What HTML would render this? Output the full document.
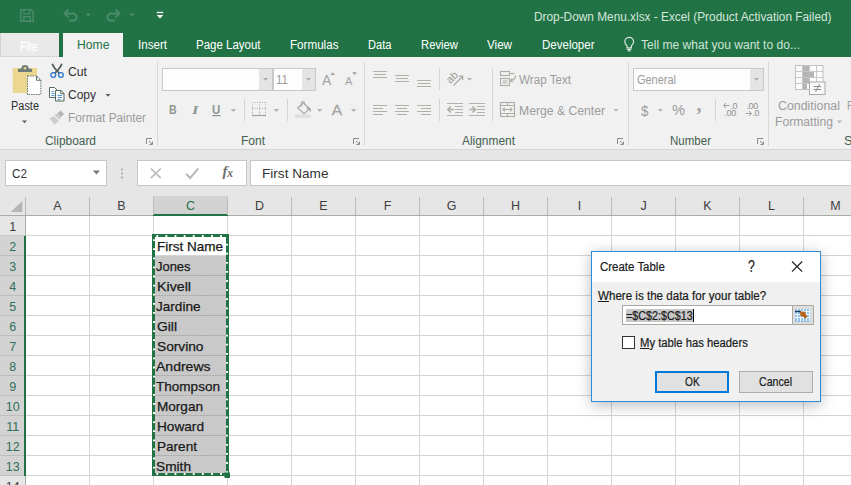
<!DOCTYPE html>
<html><head><meta charset="utf-8">
<style>
*{box-sizing:border-box;margin:0;padding:0}
html,body{width:851px;height:485px;overflow:hidden;background:#fff}
body{font-family:"Liberation Sans",sans-serif;position:relative;font-size:12px;color:#333}
.a{position:absolute}
.t{position:absolute;white-space:nowrap;line-height:1;transform-origin:0 0}
svg{position:absolute;overflow:visible}
</style></head><body>
<!-- backgrounds -->
<div class="a" style="left:0;top:0;width:851px;height:57px;background:#217346"></div>
<div class="a" style="left:0;top:57px;width:851px;height:93px;background:#f1f1f1"></div>
<div class="a" style="left:0;top:149px;width:851px;height:1px;background:#d6d6d6"></div>
<div class="a" style="left:0;top:150px;width:851px;height:46px;background:#e6e6e6"></div>
<!-- tabs -->
<div class="a" style="left:0;top:33px;width:59px;height:24px;background:#e9e9e9;border-left:1px solid #d2d2d2;border-bottom:1px dotted #c4c4c4"></div>
<div class="a" style="left:63px;top:33px;width:60px;height:25px;background:#f1f1f1"></div>
<!-- quick access -->
<svg style="left:0;top:0" width="200" height="33" viewBox="0 0 200 33" fill="none" stroke="#4d8a69" stroke-width="1.500">
 <path d="M20.800 9.800h10.400l2 2v9.400H20.800z"/><path d="M23.800 10v3.800h6V10" stroke-width="1.300"/><path d="M23.800 21v-4.300h6.400V21" stroke-width="1.300"/>
 <path d="M69 20.800h3.800a3.700 3.700 0 0 0 0-7.400H65" stroke-width="2"/><path d="M68.600 9.400 64.600 13.400 68.600 17.400" stroke-width="2"/>
 <path d="M115 20.800h-3.800a3.700 3.700 0 0 1 0-7.400H119" stroke-width="2"/><path d="M115.400 9.400 119.400 13.400 115.400 17.400" stroke-width="2"/>
 <path d="M85.500 13.500h5.400l-2.700 3z" fill="#4d8a69" stroke="none"/>
 <path d="M129.500 13.500h5.400l-2.700 3z" fill="#4d8a69" stroke="none"/>
 <path d="M156.800 12.500h6.400" stroke="#fff" stroke-width="1.400"/><path d="M156.600 15h6.800l-3.400 3.600z" fill="#fff" stroke="none"/>
</svg>
<!-- lightbulb -->
<svg style="left:620px;top:35px" width="18" height="18" viewBox="0 0 18 18" fill="none" stroke="#d5e6dc" stroke-width="1.200">
 <path d="M7 10.800c-1.500-1.200-2.200-2.500-2.200-4a4.400 4.400 0 0 1 8.800 0c0 1.500-.7 2.800-2.200 4v2H7z"/><path d="M7 14.300h4.400M7.800 15.900h2.800"/>
</svg>
<!-- group separators -->
<div class="a" style="left:157px;top:62px;width:1px;height:84px;background:#d8d8d8"></div>
<div class="a" style="left:364px;top:62px;width:1px;height:84px;background:#d8d8d8"></div>
<div class="a" style="left:628px;top:62px;width:1px;height:84px;background:#d8d8d8"></div>
<div class="a" style="left:768px;top:62px;width:1px;height:84px;background:#d8d8d8"></div>
<!-- inner separators -->
<div class="a" style="left:244px;top:99px;width:1px;height:22px;background:#d4d4d4"></div>
<div class="a" style="left:287px;top:99px;width:1px;height:22px;background:#d4d4d4"></div>
<div class="a" style="left:439px;top:68px;width:1px;height:22px;background:#d4d4d4"></div>
<div class="a" style="left:439px;top:99px;width:1px;height:22px;background:#d4d4d4"></div>
<div class="a" style="left:492px;top:68px;width:1px;height:53px;background:#d4d4d4"></div>
<div class="a" style="left:715px;top:99px;width:1px;height:22px;background:#d4d4d4"></div>
<!-- combo boxes -->
<div class="a" style="left:162px;top:68px;width:111px;height:23px;background:#fdfdfd;border:1px solid #c8c8c8"></div>
<div class="a" style="left:259px;top:69px;width:13px;height:21px;background:#e4e4e4"></div>
<div class="a" style="left:273px;top:68px;width:43px;height:23px;background:#fdfdfd;border:1px solid #c8c8c8"></div>
<div class="a" style="left:302px;top:69px;width:13px;height:21px;background:#e4e4e4"></div>
<div class="a" style="left:633px;top:68px;width:131px;height:23px;background:#fdfdfd;border:1px solid #c8c8c8"></div>
<div class="a" style="left:750px;top:69px;width:13px;height:21px;background:#e4e4e4"></div>
<!-- ICONS -->
<svg style="left:0;top:0" width="851" height="150" viewBox="0 0 851 150" fill="none">
<!-- PASTE -->
<rect x="12.700" y="68" width="24.300" height="25" fill="#ecd791"/>
<path d="M18 72v-3.200h3.200a3.800 3.800 0 0 1 7.600 0H32V72z" fill="#6f7d78"/>
<circle cx="25" cy="68.300" r="1.300" fill="#ecd791"/>
<path d="M27.500 76h9l4.300 4.300V94.500H27.500z" fill="#fff" stroke="#667a74" stroke-width="1.100" stroke-dasharray="1.600 .900"/>
<path d="M36.500 76v4.300h4.300" stroke="#667a74" stroke-width="1"/>
<path d="M22 120.500h5l-2.500 2.800z" fill="#5a5a5a"/>
<!-- CUT -->
<path d="M52.200 63.800c1.500 4 4.300 7 7.300 9.600M61.900 63.800c-1.500 4-4.300 7-7.300 9.600" stroke="#55605c" stroke-width="1.700"/>
<circle cx="53.300" cy="75" r="2.400" stroke="#2d77c9" stroke-width="1.300"/>
<circle cx="60.900" cy="75" r="2.400" stroke="#2d77c9" stroke-width="1.300"/>
<!-- COPY -->
<path d="M49.500 87.500h5l2.500 2.500v7.500h-7.500z" fill="#fdfdfd" stroke="#54695f" stroke-width="1"/>
<path d="M51.500 91.500h2.500M51.500 93.500h3M51.500 95.500h3" stroke="#5b97d6" stroke-width="1"/>
<path d="M55.500 90.500h5.500l3 3v7.500h-8.500z" fill="#fdfdfd" stroke="#54695f" stroke-width="1"/>
<path d="M60.800 90.500v3.200H64" stroke="#54695f" stroke-width="1"/>
<path d="M57.500 95.500h4.500M57.500 97.500h4.500M57.500 99.500h3" stroke="#5b97d6" stroke-width="1"/>
<path d="M105.500 94h5l-2.500 2.800z" fill="#5a5a5a"/>
<!-- FORMAT PAINTER -->
<path d="M60.500 110.500l3.500 3.500-3.200 3.200-3.500-3.500z" fill="#b5b5b5"/>
<path d="M56.300 113.500l4.500 4.500-1.500 1.500-4.500-4.500z" fill="#c4c4c4"/>
<path d="M54 116l5 5-4.500 3.500-5-6z" fill="#cdcdcd"/>
<!-- launchers -->
<g stroke="#8a8a8a" stroke-width="1">
<path d="M146.500 144v-5.500h5.500M149 141l3 3M152.500 141.500v3h-3"/>
<path d="M353.500 144v-5.500h5.500M356 141l3 3M359.500 141.500v3h-3"/>
<path d="M617.500 144v-5.500h5.500M620 141l3 3M623.500 141.500v3h-3"/>
<path d="M757.500 144v-5.500h5.500M760 141l3 3M763.500 141.500v3h-3"/>
</g>
<!-- combo arrows -->
<g fill="#a9a9a9">
<path d="M263 78h5l-2.500 2.800z"/><path d="M306 78h5l-2.500 2.800z"/><path d="M754 78h5l-2.500 2.800z"/>
</g>
<!-- small arrows (disabled) -->
<g fill="#b3b3b3">
<path d="M230.700 109h5.400l-2.700 3z"/><path d="M273.700 109h5.400l-2.700 3z"/><path d="M317 109h5.400l-2.700 3z"/><path d="M351 109h5.400l-2.700 3z"/>
<path d="M467 78h5l-2.500 2.800z"/><path d="M613.500 109h5l-2.500 2.800z"/><path d="M657.700 109h5l-2.500 2.800z"/><path d="M837 120.500h5l-2.500 2.800z"/>
</g>
<!-- A^ A v -->
<g fill="#a3a3a3">
<path d="M330.300 75l2.400-2.800 2.400 2.800z"/><path d="M352 72.300h5l-2.500 2.800z"/>
</g>
<!-- underline for U -->
<path d="M212.200 115.600h8.400" stroke="#8f9893" stroke-width="1.200"/>
<!-- borders icon -->
<g stroke="#b0b0b0" stroke-width="1" stroke-dasharray="1 1.500">
<path d="M252 102.500h14M252 108.500h14M252.500 102v13M259.500 102v13M265.500 102v13"/>
</g>
<path d="M252 115.500h14" stroke="#a0a0a0" stroke-width="1.200"/>
<!-- fill bucket -->
<path d="M303.500 103l6 6-5.500 4.800-6.300-6z" stroke="#a8a8a8" stroke-width="1.200"/>
<path d="M301.300 107v-4a1.600 1.600 0 0 1 3.200 0v1.500" stroke="#a8a8a8" stroke-width="1"/>
<path d="M308 106.500c2.500 1 3.300 3 3 5.500-1.300-1-2-2.500-4.500-3.300z" fill="#a8a8a8"/>
<rect x="295" y="114.500" width="16" height="3.200" fill="#dddddd"/>
<!-- align top/mid/bottom -->
<g stroke="#b1b1a9" stroke-width="1.100">
<path d="M373 71.500h14M374 74.500h12M373 77.500h14"/>
<path d="M395 75.500h14M396 78.500h12M395 81.500h14"/>
<path d="M417 80.500h14M418 83.500h12M417 86.500h14"/>
<path d="M373 105.500h14M373 108.500h10M373 111.500h14M373 114.500h10"/>
<path d="M395 105.500h14M397 108.500h10M395 111.500h14M397 114.500h10"/>
<path d="M417 105.500h14M421 108.500h10M417 111.500h14M421 114.500h10"/>
<!-- indent -->
<path d="M447 103.500h16M447 115.500h16M455 106.500h8M455 109.500h8M455 112.500h8"/>
<path d="M469 103.500h16M469 115.500h16M477 106.500h8M477 109.500h8M477 112.500h8"/>
</g>
<g stroke="#adada5" stroke-width="1.500">
<path d="M448 109.500h6M450.800 106.500l-3 3 3 3"/>
<path d="M469.500 109.500h6M472.500 106.500l3 3-3 3"/>
</g>
<!-- orientation -->
<path d="M453.500 85.500l9-9M459 76.200h3.700v3.700" stroke="#a8a8a0" stroke-width="1.200"/>
<!-- wrap text -->
<g stroke="#adada5" stroke-width="1.100">
<rect x="500.500" y="71.500" width="9" height="4"/>
<path d="M509.500 73.500h5"/>
<rect x="500.500" y="78.500" width="9" height="7"/>
<path d="M502.500 81h5M502.500 83h5"/>
<path d="M515.500 75.500c0 3-1.500 5-5 5M512.500 78.500l-2.200 2 2.200 2"/>
</g>
<!-- merge -->
<g stroke="#adada5" stroke-width="1.100">
<rect x="500.500" y="102.500" width="14" height="14"/>
<path d="M500.500 105.500h14M500.500 113.500h14M507.500 102.500v3M507.500 113.500v3"/>
<path d="M503 109.500h9M504.800 107.700l-1.800 1.800 1.800 1.800M510.200 107.700l1.800 1.800-1.800 1.800"/>
</g>
<!-- decimal icons -->
<g stroke="#a0a0a0" stroke-width="1">
<path d="M723.500 105.500h6M726 103l-2.500 2.500 2.500 2.500"/>
<path d="M745.500 113.500h6M749 111l2.500 2.500-2.500 2.500"/>
</g>
<!-- conditional formatting -->
<rect x="795.500" y="65.500" width="27.500" height="24" fill="#fbfbfb" stroke="#c2c2c2"/>
<path d="M802.500 65.500v24M809.500 65.500v24M816.500 65.500v24M795.500 71.500h27.500M795.500 77.500h27.500M795.500 83.500h27.500" stroke="#c8c8c8"/>
<rect x="803" y="66" width="6" height="5" fill="#b4b4b4"/>
<rect x="803" y="72" width="11" height="5" fill="#b4b4b4"/>
<rect x="803" y="78" width="6" height="5" fill="#b4b4b4"/>
<rect x="803" y="84" width="4" height="5" fill="#b4b4b4"/>
<rect x="809.500" y="82" width="15.500" height="12.500" fill="#fafafa" stroke="#a9a9a9"/>
<path d="M813.500 86.500h7.500M813.500 89.500h7.500M819.500 84l-4 8" stroke="#8c8c8c" stroke-width="1"/>
</svg>
<!-- orientation "ab" -->
<span class="t" style="left:446px;top:72px;font-size:11px;color:#9c9c94;transform:rotate(-45deg);transform-origin:50% 50%">ab</span>
<!-- A grow/shrink -->
<span class="t" style="left:322px;top:72.500px;font-size:14px;color:#a3a3a3">A</span>
<span class="t" style="left:345px;top:75.600px;font-size:11px;color:#a3a3a3">A</span>
<span class="t" style="left:331.700px;top:102px;font-size:15.500px;color:#a3a3a3;-webkit-text-stroke:.3px #a3a3a3">A</span>
<!-- comma -->
<span class="t" style="left:696.500px;top:93.500px;font-size:20px;font-weight:bold;color:#a3a3a3;font-family:'Liberation Serif',serif">,</span>
<!-- decimals -->
<span class="t" style="left:730.500px;top:101.600px;font-size:9px;color:#909090;letter-spacing:-.4px">.0</span>
<span class="t" style="left:724.500px;top:108.800px;font-size:9px;color:#909090;letter-spacing:-.4px">.00</span>
<span class="t" style="left:746.500px;top:101.600px;font-size:9px;color:#909090;letter-spacing:-.4px">.00</span>
<span class="t" style="left:752.500px;top:108.800px;font-size:9px;color:#909090;letter-spacing:-.4px">.0</span>

<!-- formula bar -->
<div class="a" style="left:5px;top:160px;width:102px;height:26px;background:#fff;border:1px solid #c6c6c6"></div>
<div class="a" style="left:137px;top:160px;width:110px;height:26px;background:#fff;border:1px solid #c6c6c6"></div>
<div class="a" style="left:250px;top:160px;width:610px;height:26px;background:#fff;border:1px solid #c6c6c6"></div>
<svg style="left:0;top:150px" width="260" height="46" viewBox="0 150 260 46" fill="none">
 <path d="M93 170.500h7l-3.500 4z" fill="#777"/>
 <rect x="121" y="168.500" width="2" height="2" fill="#b0b0b0"/><rect x="121" y="172.500" width="2" height="2" fill="#b0b0b0"/><rect x="121" y="176.500" width="2" height="2" fill="#b0b0b0"/>
 <path d="M150.800 168.500l10 9.600M160.800 168.500l-10 9.600" stroke="#b9b9b9" stroke-width="1.500"/>
 <path d="M186 173.800l4.200 4.200 8-9.500" stroke="#b9b9b9" stroke-width="2"/>
</svg>
<span class="t" style="left:222.500px;top:163.500px;font-family:'Liberation Serif',serif;font-style:italic;font-size:15px;color:#707070;font-weight:bold;letter-spacing:-.2px">f<span style="font-size:11.500px;position:relative;top:1px">x</span></span>
<div class="a" style="left:0;top:196px;width:851px;height:19px;background:#e6e6e6"></div>
<div class="a" style="left:153px;top:196px;width:75px;height:18px;background:#d3d3d3"></div>
<div class="a" style="left:0;top:215px;width:851px;height:1px;background:#a9aca9"></div>
<div class="a" style="left:153px;top:214px;width:75px;height:2px;background:#217346"></div>
<div class="a" style="left:25px;top:197px;width:1px;height:18px;background:#b9bbb9"></div>
<div class="a" style="left:89px;top:197px;width:1px;height:18px;background:#b9bbb9"></div>
<div class="a" style="left:153px;top:197px;width:1px;height:18px;background:#b9bbb9"></div>
<div class="a" style="left:227px;top:197px;width:1px;height:18px;background:#b9bbb9"></div>
<div class="a" style="left:291px;top:197px;width:1px;height:18px;background:#b9bbb9"></div>
<div class="a" style="left:355px;top:197px;width:1px;height:18px;background:#b9bbb9"></div>
<div class="a" style="left:419px;top:197px;width:1px;height:18px;background:#b9bbb9"></div>
<div class="a" style="left:483px;top:197px;width:1px;height:18px;background:#b9bbb9"></div>
<div class="a" style="left:547px;top:197px;width:1px;height:18px;background:#b9bbb9"></div>
<div class="a" style="left:611px;top:197px;width:1px;height:18px;background:#b9bbb9"></div>
<div class="a" style="left:675px;top:197px;width:1px;height:18px;background:#b9bbb9"></div>
<div class="a" style="left:739px;top:197px;width:1px;height:18px;background:#b9bbb9"></div>
<div class="a" style="left:803px;top:197px;width:1px;height:18px;background:#b9bbb9"></div>
<svg style="left:0;top:196px" width="25" height="20" viewBox="0 196 25 20"><path d="M22.3 201v11H10.700z" fill="#b4b6b4"/></svg>
<div class="a" style="left:26px;top:216px;width:825px;height:269px;background:#fff"></div>
<div class="a" style="left:0;top:216px;width:25px;height:19px;background:#e6e6e6"></div>
<div class="a" style="left:0;top:235px;width:25px;height:1px;background:#c6c6c6"></div>
<div class="a" style="left:0;top:236px;width:25px;height:19px;background:#d3d3d3"></div>
<div class="a" style="left:0;top:255px;width:25px;height:1px;background:#bdbdbd"></div>
<div class="a" style="left:0;top:256px;width:25px;height:19px;background:#d3d3d3"></div>
<div class="a" style="left:0;top:275px;width:25px;height:1px;background:#bdbdbd"></div>
<div class="a" style="left:0;top:276px;width:25px;height:19px;background:#d3d3d3"></div>
<div class="a" style="left:0;top:295px;width:25px;height:1px;background:#bdbdbd"></div>
<div class="a" style="left:0;top:296px;width:25px;height:19px;background:#d3d3d3"></div>
<div class="a" style="left:0;top:315px;width:25px;height:1px;background:#bdbdbd"></div>
<div class="a" style="left:0;top:316px;width:25px;height:19px;background:#d3d3d3"></div>
<div class="a" style="left:0;top:335px;width:25px;height:1px;background:#bdbdbd"></div>
<div class="a" style="left:0;top:336px;width:25px;height:19px;background:#d3d3d3"></div>
<div class="a" style="left:0;top:355px;width:25px;height:1px;background:#bdbdbd"></div>
<div class="a" style="left:0;top:356px;width:25px;height:19px;background:#d3d3d3"></div>
<div class="a" style="left:0;top:375px;width:25px;height:1px;background:#bdbdbd"></div>
<div class="a" style="left:0;top:376px;width:25px;height:19px;background:#d3d3d3"></div>
<div class="a" style="left:0;top:395px;width:25px;height:1px;background:#bdbdbd"></div>
<div class="a" style="left:0;top:396px;width:25px;height:19px;background:#d3d3d3"></div>
<div class="a" style="left:0;top:415px;width:25px;height:1px;background:#bdbdbd"></div>
<div class="a" style="left:0;top:416px;width:25px;height:19px;background:#d3d3d3"></div>
<div class="a" style="left:0;top:435px;width:25px;height:1px;background:#bdbdbd"></div>
<div class="a" style="left:0;top:436px;width:25px;height:19px;background:#d3d3d3"></div>
<div class="a" style="left:0;top:455px;width:25px;height:1px;background:#bdbdbd"></div>
<div class="a" style="left:0;top:456px;width:25px;height:19px;background:#d3d3d3"></div>
<div class="a" style="left:0;top:475px;width:25px;height:1px;background:#bdbdbd"></div>
<div class="a" style="left:0;top:476px;width:25px;height:19px;background:#e6e6e6"></div>
<div class="a" style="left:0;top:495px;width:25px;height:1px;background:#c6c6c6"></div>
<div class="a" style="left:25px;top:216px;width:1px;height:269px;background:#a9aca9"></div>
<div class="a" style="left:24px;top:236px;width:2px;height:240px;background:#217346"></div>
<div class="a" style="left:26px;top:235px;width:825px;height:1px;background:#d4d4d4"></div>
<div class="a" style="left:26px;top:255px;width:825px;height:1px;background:#d4d4d4"></div>
<div class="a" style="left:26px;top:275px;width:825px;height:1px;background:#d4d4d4"></div>
<div class="a" style="left:26px;top:295px;width:825px;height:1px;background:#d4d4d4"></div>
<div class="a" style="left:26px;top:315px;width:825px;height:1px;background:#d4d4d4"></div>
<div class="a" style="left:26px;top:335px;width:825px;height:1px;background:#d4d4d4"></div>
<div class="a" style="left:26px;top:355px;width:825px;height:1px;background:#d4d4d4"></div>
<div class="a" style="left:26px;top:375px;width:825px;height:1px;background:#d4d4d4"></div>
<div class="a" style="left:26px;top:395px;width:825px;height:1px;background:#d4d4d4"></div>
<div class="a" style="left:26px;top:415px;width:825px;height:1px;background:#d4d4d4"></div>
<div class="a" style="left:26px;top:435px;width:825px;height:1px;background:#d4d4d4"></div>
<div class="a" style="left:26px;top:455px;width:825px;height:1px;background:#d4d4d4"></div>
<div class="a" style="left:26px;top:475px;width:825px;height:1px;background:#d4d4d4"></div>
<div class="a" style="left:89px;top:216px;width:1px;height:269px;background:#d4d4d4"></div>
<div class="a" style="left:153px;top:216px;width:1px;height:269px;background:#d4d4d4"></div>
<div class="a" style="left:227px;top:216px;width:1px;height:269px;background:#d4d4d4"></div>
<div class="a" style="left:291px;top:216px;width:1px;height:269px;background:#d4d4d4"></div>
<div class="a" style="left:355px;top:216px;width:1px;height:269px;background:#d4d4d4"></div>
<div class="a" style="left:419px;top:216px;width:1px;height:269px;background:#d4d4d4"></div>
<div class="a" style="left:483px;top:216px;width:1px;height:269px;background:#d4d4d4"></div>
<div class="a" style="left:547px;top:216px;width:1px;height:269px;background:#d4d4d4"></div>
<div class="a" style="left:611px;top:216px;width:1px;height:269px;background:#d4d4d4"></div>
<div class="a" style="left:675px;top:216px;width:1px;height:269px;background:#d4d4d4"></div>
<div class="a" style="left:739px;top:216px;width:1px;height:269px;background:#d4d4d4"></div>
<div class="a" style="left:803px;top:216px;width:1px;height:269px;background:#d4d4d4"></div>
<div class="a" style="left:154px;top:256px;width:73px;height:219px;background:#c9c9c9"></div>
<div class="a" style="left:155px;top:275px;width:71px;height:1px;background:repeating-linear-gradient(90deg,#a9aca9 0 2px,#bdbdbd 2px 3px)"></div>
<div class="a" style="left:155px;top:295px;width:71px;height:1px;background:repeating-linear-gradient(90deg,#a9aca9 0 2px,#bdbdbd 2px 3px)"></div>
<div class="a" style="left:155px;top:315px;width:71px;height:1px;background:repeating-linear-gradient(90deg,#a9aca9 0 2px,#bdbdbd 2px 3px)"></div>
<div class="a" style="left:155px;top:335px;width:71px;height:1px;background:repeating-linear-gradient(90deg,#a9aca9 0 2px,#bdbdbd 2px 3px)"></div>
<div class="a" style="left:155px;top:355px;width:71px;height:1px;background:repeating-linear-gradient(90deg,#a9aca9 0 2px,#bdbdbd 2px 3px)"></div>
<div class="a" style="left:155px;top:375px;width:71px;height:1px;background:repeating-linear-gradient(90deg,#a9aca9 0 2px,#bdbdbd 2px 3px)"></div>
<div class="a" style="left:155px;top:395px;width:71px;height:1px;background:repeating-linear-gradient(90deg,#a9aca9 0 2px,#bdbdbd 2px 3px)"></div>
<div class="a" style="left:155px;top:415px;width:71px;height:1px;background:repeating-linear-gradient(90deg,#a9aca9 0 2px,#bdbdbd 2px 3px)"></div>
<div class="a" style="left:155px;top:435px;width:71px;height:1px;background:repeating-linear-gradient(90deg,#a9aca9 0 2px,#bdbdbd 2px 3px)"></div>
<div class="a" style="left:155px;top:455px;width:71px;height:1px;background:repeating-linear-gradient(90deg,#a9aca9 0 2px,#bdbdbd 2px 3px)"></div>
<svg style="left:0;top:0" width="851" height="485" viewBox="0 0 851 485" fill="none"><rect x="153.500" y="235.500" width="74" height="239" stroke="#217346" stroke-width="3"/><g stroke="#fff" stroke-width="2" stroke-dasharray="1.800 7.300"><path d="M156.400 236H226"/><path d="M156.400 474H226"/><path d="M154 239.200V474"/><path d="M227 243.700V474"/></g><rect x="224.500" y="472.500" width="5.500" height="5.500" fill="#217346"/></svg>
<div class="a" style="left:591px;top:251px;width:230px;height:151px;background:#f0f0f0;border:1px solid #2f8cd8;box-shadow:0 3px 14px rgba(0,0,0,.28)"></div>
<div class="a" style="left:592px;top:252px;width:228px;height:30px;background:#fff"></div>
<svg style="left:0;top:0" width="851" height="485" viewBox="0 0 851 485" fill="none"><path d="M792 261.500l10.200 10.200M802.200 261.500l-10.200 10.200" stroke="#1a1a1a" stroke-width="1.100"/></svg>
<div class="a" style="left:622px;top:305px;width:192px;height:20px;background:#fff;border:1px solid #a9a9a2"></div>
<div class="a" style="left:626px;top:309px;width:67px;height:13px;background:#c8c8c8"></div>
<div class="a" style="left:693px;top:309px;width:1px;height:13px;background:#000"></div>
<div class="a" style="left:792px;top:305px;width:22px;height:20px;background:#dedede;border:1.500px solid #a9a9a2"></div>
<svg style="left:0;top:0" width="851" height="485" viewBox="0 0 851 485" fill="none"><rect x="795" y="309" width="15.500" height="12" fill="#f4f8fb"/><g stroke="#2b8be0" stroke-width="1.200" stroke-dasharray="2 1"><path d="M795 310h15.500M795 313h15.500M795 316h15.500M795 319h15.500M795 321h15.500"/></g><path d="M795 311.500h6" stroke="#1d3557" stroke-width="1.500"/><path d="M800 311.500l5.500 .3 0 2 2 2.600-2.300 2.300-2.600-2.400-2.200 .200z" fill="#b5651d"/></svg>
<div class="a" style="left:622px;top:336px;width:13px;height:13px;background:#fff;border:1px solid #333"></div>
<div class="a" style="left:655px;top:371px;width:74px;height:22px;background:#e1e1e1;border:2px solid #0078d7"></div>
<div class="a" style="left:739px;top:371px;width:74px;height:22px;background:#e1e1e1;border:1px solid #adadad"></div>
<span class="t" id="t0" style="left:533.50px;top:11.00px;font-size:12px;color:#d5e6dc;transform:scaleX(0.9869);">Drop-Down Menu.xlsx - Excel (Product Activation Failed)</span>
<span class="t" id="t1" style="left:20.40px;top:41.00px;font-size:12px;color:#ffffff;transform:scaleX(0.8995);-webkit-text-stroke:.3px #fff">File</span>
<span class="t" id="t2" style="left:76.50px;top:39.00px;font-size:12px;color:#217346;transform:scaleX(1.0151);">Home</span>
<span class="t" id="t3" style="left:138.00px;top:39.00px;font-size:12px;color:#ffffff;transform:scaleX(0.9662);">Insert</span>
<span class="t" id="t4" style="left:196.00px;top:39.00px;font-size:12px;color:#ffffff;transform:scaleX(0.9571);">Page Layout</span>
<span class="t" id="t5" style="left:290.00px;top:39.00px;font-size:12px;color:#ffffff;transform:scaleX(0.9697);">Formulas</span>
<span class="t" id="t6" style="left:368.00px;top:39.00px;font-size:12px;color:#ffffff;transform:scaleX(0.9267);">Data</span>
<span class="t" id="t7" style="left:421.00px;top:39.00px;font-size:12px;color:#ffffff;transform:scaleX(0.9401);">Review</span>
<span class="t" id="t8" style="left:487.00px;top:39.00px;font-size:12px;color:#ffffff;transform:scaleX(0.9691);">View</span>
<span class="t" id="t9" style="left:541.50px;top:39.00px;font-size:12px;color:#ffffff;transform:scaleX(0.9597);">Developer</span>
<span class="t" id="t10" style="left:641.00px;top:39.00px;font-size:12px;color:#cfe3d7;transform:scaleX(1.0057);">Tell me what you want to do...</span>
<span class="t" id="t11" style="left:11.00px;top:100.00px;font-size:12px;color:#303030;transform:scaleX(0.9124);">Paste</span>
<span class="t" id="t12" style="left:68.00px;top:66.00px;font-size:12px;color:#303030;transform:scaleX(1.0167);">Cut</span>
<span class="t" id="t13" style="left:68.00px;top:89.00px;font-size:12px;color:#303030;transform:scaleX(0.9994);">Copy</span>
<span class="t" id="t14" style="left:68.00px;top:112.00px;font-size:12px;color:#9c9c9c;transform:scaleX(0.9829);">Format Painter</span>
<span class="t" id="t15" style="left:45.00px;top:135.00px;font-size:12px;color:#44604f;transform:scaleX(0.9927);">Clipboard</span>
<span class="t" id="t16" style="left:241.00px;top:135.00px;font-size:12px;color:#44604f;transform:scaleX(0.9993);">Font</span>
<span class="t" id="t17" style="left:462.00px;top:135.00px;font-size:12px;color:#44604f;transform:scaleX(0.9930);">Alignment</span>
<span class="t" id="t18" style="left:670.00px;top:135.00px;font-size:12px;color:#44604f;transform:scaleX(0.9605);">Number</span>
<span class="t" id="t19" style="left:844.00px;top:135.00px;font-size:12px;color:#44604f;transform:scaleX(1.0579);">St</span>
<span class="t" id="t20" style="left:276.00px;top:74.00px;font-size:12px;color:#9c9c9c;transform:scaleX(0.9624);">11</span>
<span class="t" id="t21" style="left:168.70px;top:104.00px;font-size:12px;color:#8f9893;transform:scaleX(0.8879);font-weight:bold">B</span>
<span class="t" id="t22" style="left:191.50px;top:104.00px;font-size:12.5px;color:#8f9893;transform:scaleX(1.3333);font-style:italic;font-family:'Liberation Serif',serif;font-weight:bold">I</span>
<span class="t" id="t23" style="left:212.20px;top:104.00px;font-size:12px;color:#8f9893;transform:scaleX(0.9571);font-weight:bold">U</span>
<span class="t" id="t24" style="left:519.00px;top:74.00px;font-size:12px;color:#9c9c9c;transform:scaleX(0.9705);">Wrap Text</span>
<span class="t" id="t25" style="left:519.00px;top:105.00px;font-size:12px;color:#9c9c9c;transform:scaleX(1.0153);">Merge &amp; Center</span>
<span class="t" id="t26" style="left:636.50px;top:74.00px;font-size:12px;color:#9c9c9c;transform:scaleX(0.9133);">General</span>
<span class="t" id="t27" style="left:640.70px;top:103.00px;font-size:15px;color:#9c9c9c;transform:scaleX(0.8989);">$</span>
<span class="t" id="t28" style="left:672.00px;top:103.00px;font-size:14px;color:#9c9c9c;transform:scaleX(1.0439);">%</span>
<span class="t" id="t29" style="left:778.00px;top:100.00px;font-size:12px;color:#9c9c9c;transform:scaleX(1.0325);">Conditional</span>
<span class="t" id="t30" style="left:775.00px;top:116.00px;font-size:12px;color:#9c9c9c;transform:scaleX(1.0112);">Formatting</span>
<span class="t" id="t31" style="left:847.00px;top:100.00px;font-size:12px;color:#9c9c9c;transform:scaleX(0.8170);">F</span>
<span class="t" id="t32" style="left:12.00px;top:167.00px;font-size:13px;color:#333;transform:scaleX(0.9023);">C2</span>
<span class="t" id="t33" style="left:262.00px;top:167.00px;font-size:13.5px;color:#333;transform:scaleX(1.0073);">First Name</span>
<span class="t" id="t34" style="left:53.33px;top:200.00px;font-size:12.5px;color:#3d3d3d;transform:scaleX(1.0000);">A</span>
<span class="t" id="t35" style="left:117.33px;top:200.00px;font-size:12.5px;color:#3d3d3d;transform:scaleX(1.0000);">B</span>
<span class="t" id="t36" style="left:185.98px;top:200.00px;font-size:12.5px;color:#217346;transform:scaleX(1.0000);">C</span>
<span class="t" id="t37" style="left:254.98px;top:200.00px;font-size:12.5px;color:#3d3d3d;transform:scaleX(1.0000);">D</span>
<span class="t" id="t38" style="left:319.33px;top:200.00px;font-size:12.5px;color:#3d3d3d;transform:scaleX(1.0000);">E</span>
<span class="t" id="t39" style="left:383.68px;top:200.00px;font-size:12.5px;color:#3d3d3d;transform:scaleX(1.0000);">F</span>
<span class="t" id="t40" style="left:446.63px;top:200.00px;font-size:12.5px;color:#3d3d3d;transform:scaleX(1.0000);">G</span>
<span class="t" id="t41" style="left:510.98px;top:200.00px;font-size:12.5px;color:#3d3d3d;transform:scaleX(1.0000);">H</span>
<span class="t" id="t42" style="left:577.76px;top:200.00px;font-size:12.5px;color:#3d3d3d;transform:scaleX(1.0000);">I</span>
<span class="t" id="t43" style="left:640.38px;top:200.00px;font-size:12.5px;color:#3d3d3d;transform:scaleX(1.0000);">J</span>
<span class="t" id="t44" style="left:703.33px;top:200.00px;font-size:12.5px;color:#3d3d3d;transform:scaleX(1.0000);">K</span>
<span class="t" id="t45" style="left:768.02px;top:200.00px;font-size:12.5px;color:#3d3d3d;transform:scaleX(1.0000);">L</span>
<span class="t" id="t46" style="left:830.29px;top:200.00px;font-size:12.5px;color:#3d3d3d;transform:scaleX(1.0000);">M</span>
<span class="t" id="t47" style="left:9.22px;top:221.00px;font-size:12.5px;color:#3d3d3d;transform:scaleX(1.0000);">1</span>
<span class="t" id="t48" style="left:9.22px;top:241.00px;font-size:12.5px;color:#2f6f55;transform:scaleX(1.0000);">2</span>
<span class="t" id="t49" style="left:9.22px;top:261.00px;font-size:12.5px;color:#2f6f55;transform:scaleX(1.0000);">3</span>
<span class="t" id="t50" style="left:9.22px;top:281.00px;font-size:12.5px;color:#2f6f55;transform:scaleX(1.0000);">4</span>
<span class="t" id="t51" style="left:9.22px;top:301.00px;font-size:12.5px;color:#2f6f55;transform:scaleX(1.0000);">5</span>
<span class="t" id="t52" style="left:9.22px;top:321.00px;font-size:12.5px;color:#2f6f55;transform:scaleX(1.0000);">6</span>
<span class="t" id="t53" style="left:9.22px;top:341.00px;font-size:12.5px;color:#2f6f55;transform:scaleX(1.0000);">7</span>
<span class="t" id="t54" style="left:9.22px;top:361.00px;font-size:12.5px;color:#2f6f55;transform:scaleX(1.0000);">8</span>
<span class="t" id="t55" style="left:9.22px;top:381.00px;font-size:12.5px;color:#2f6f55;transform:scaleX(1.0000);">9</span>
<span class="t" id="t56" style="left:5.75px;top:401.00px;font-size:12.5px;color:#2f6f55;transform:scaleX(1.0000);">10</span>
<span class="t" id="t57" style="left:6.21px;top:421.00px;font-size:12.5px;color:#2f6f55;transform:scaleX(1.0000);">11</span>
<span class="t" id="t58" style="left:5.75px;top:441.00px;font-size:12.5px;color:#2f6f55;transform:scaleX(1.0000);">12</span>
<span class="t" id="t59" style="left:5.75px;top:461.00px;font-size:12.5px;color:#2f6f55;transform:scaleX(1.0000);">13</span>
<span class="t" id="t60" style="left:5.75px;top:481.00px;font-size:12.5px;color:#3d3d3d;transform:scaleX(1.0000);">14</span>
<span class="t" id="t61" style="left:156.50px;top:241.00px;font-size:12.6px;color:#1a1a1a;transform:scaleX(1.0718);-webkit-text-stroke:.25px #1a1a1a">First Name</span>
<span class="t" id="t62" style="left:156.00px;top:261.00px;font-size:12.6px;color:#1a1a1a;transform:scaleX(1.0265);-webkit-text-stroke:.25px #1a1a1a">Jones</span>
<span class="t" id="t63" style="left:156.50px;top:281.00px;font-size:12.6px;color:#1a1a1a;transform:scaleX(1.1292);-webkit-text-stroke:.25px #1a1a1a">Kivell</span>
<span class="t" id="t64" style="left:156.00px;top:301.00px;font-size:12.6px;color:#1a1a1a;transform:scaleX(1.0772);-webkit-text-stroke:.25px #1a1a1a">Jardine</span>
<span class="t" id="t65" style="left:156.50px;top:321.00px;font-size:12.6px;color:#1a1a1a;transform:scaleX(1.0987);-webkit-text-stroke:.25px #1a1a1a">Gill</span>
<span class="t" id="t66" style="left:156.50px;top:341.00px;font-size:12.6px;color:#1a1a1a;transform:scaleX(1.0889);-webkit-text-stroke:.25px #1a1a1a">Sorvino</span>
<span class="t" id="t67" style="left:156.00px;top:361.00px;font-size:12.6px;color:#1a1a1a;transform:scaleX(1.1122);-webkit-text-stroke:.25px #1a1a1a">Andrews</span>
<span class="t" id="t68" style="left:156.00px;top:381.00px;font-size:12.6px;color:#1a1a1a;transform:scaleX(1.0753);-webkit-text-stroke:.25px #1a1a1a">Thompson</span>
<span class="t" id="t69" style="left:156.50px;top:401.00px;font-size:12.6px;color:#1a1a1a;transform:scaleX(1.0772);-webkit-text-stroke:.25px #1a1a1a">Morgan</span>
<span class="t" id="t70" style="left:156.50px;top:421.00px;font-size:12.6px;color:#1a1a1a;transform:scaleX(1.0828);-webkit-text-stroke:.25px #1a1a1a">Howard</span>
<span class="t" id="t71" style="left:156.50px;top:441.00px;font-size:12.6px;color:#1a1a1a;transform:scaleX(1.0779);-webkit-text-stroke:.25px #1a1a1a">Parent</span>
<span class="t" id="t72" style="left:156.00px;top:461.00px;font-size:12.6px;color:#1a1a1a;transform:scaleX(1.0869);-webkit-text-stroke:.25px #1a1a1a">Smith</span>
<span class="t" id="t73" style="left:600.20px;top:261.00px;font-size:12px;color:#1a1a1a;transform:scaleX(0.9554);-webkit-text-stroke:.2px #1a1a1a">Create Table</span>
<span class="t" id="t74" style="left:748.40px;top:259.00px;font-size:16px;color:#1a1a1a;transform:scaleX(0.7635);-webkit-text-stroke:.2px #1a1a1a">?</span>
<span class="t" id="t75" style="left:598.30px;top:290.00px;font-size:12px;color:#1a1a1a;transform:scaleX(0.9655);-webkit-text-stroke:.2px #1a1a1a"><u>W</u>here is the data for your table?</span>
<span class="t" id="t76" style="left:626.40px;top:310.00px;font-size:12px;color:#1a1a1a;transform:scaleX(0.8953);-webkit-text-stroke:.2px #1a1a1a">=$C$2:$C$13</span>
<span class="t" id="t77" style="left:639.60px;top:337.00px;font-size:12px;color:#1a1a1a;transform:scaleX(0.9394);-webkit-text-stroke:.2px #1a1a1a"><u>M</u>y table has headers</span>
<span class="t" id="t78" style="left:684.50px;top:376.00px;font-size:12px;color:#1a1a1a;transform:scaleX(0.8476);-webkit-text-stroke:.2px #1a1a1a">OK</span>
<span class="t" id="t79" style="left:759.30px;top:376.00px;font-size:12px;color:#1a1a1a;transform:scaleX(0.8833);-webkit-text-stroke:.2px #1a1a1a">Cancel</span>

</body></html>
